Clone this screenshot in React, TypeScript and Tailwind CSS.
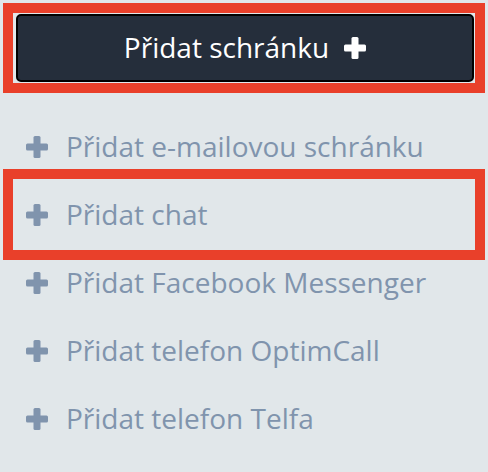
import React from 'react';

const Plus: React.FC<{ className?: string }> = ({ className }) => (
  <svg viewBox="0 0 22 22" className={className} fill="currentColor">
    <rect x="0" y="7.5" width="22" height="7" rx="1.5" />
    <rect x="7.5" y="0" width="7" height="22" rx="1.5" />
  </svg>
);

const items = [
  'Přidat e-mailovou schránku',
  'Přidat chat',
  'Přidat Facebook Messenger',
  'Přidat telefon OptimCall',
  'Přidat telefon Telfa',
];

export default function App() {
  return (
    <div
      className="w-[488px] h-[472px] bg-[#e1e7ea] px-[3px] pt-[3px] overflow-hidden"
      style={{ fontFamily: '"Open Sans", "Noto Sans", sans-serif' }}
    >
      {/* Highlighted main button */}
      <div className="border-[10px] border-[#e9402a] pl-[3px] pr-px py-px">
        <button className="w-full h-[68px] rounded-[5px] border-2 border-black bg-[#252e3b] text-white flex items-center justify-center gap-[15px]">
          <span className="text-[28px] leading-none pb-[3px]">Přidat schránku</span>
          <Plus className="w-[22px] h-[22px]" />
        </button>
      </div>

      {/* Add list */}
      <ul className="mt-[20px]">
        {items.map((label, i) => (
          <li
            key={label}
            className="relative h-[68px] flex items-center gap-[18px] pl-[23px] text-[#8094ad]"
          >
            {i === 1 && (
              <span className="absolute left-0 right-0 top-[-12px] bottom-[-11px] border-[10px] border-[#e9402a] pointer-events-none" />
            )}
            <Plus className="w-[22px] h-[22px] shrink-0" />
            <span className="text-[28px] leading-none pb-[3px]">{label}</span>
          </li>
        ))}
      </ul>
    </div>
  );
}
